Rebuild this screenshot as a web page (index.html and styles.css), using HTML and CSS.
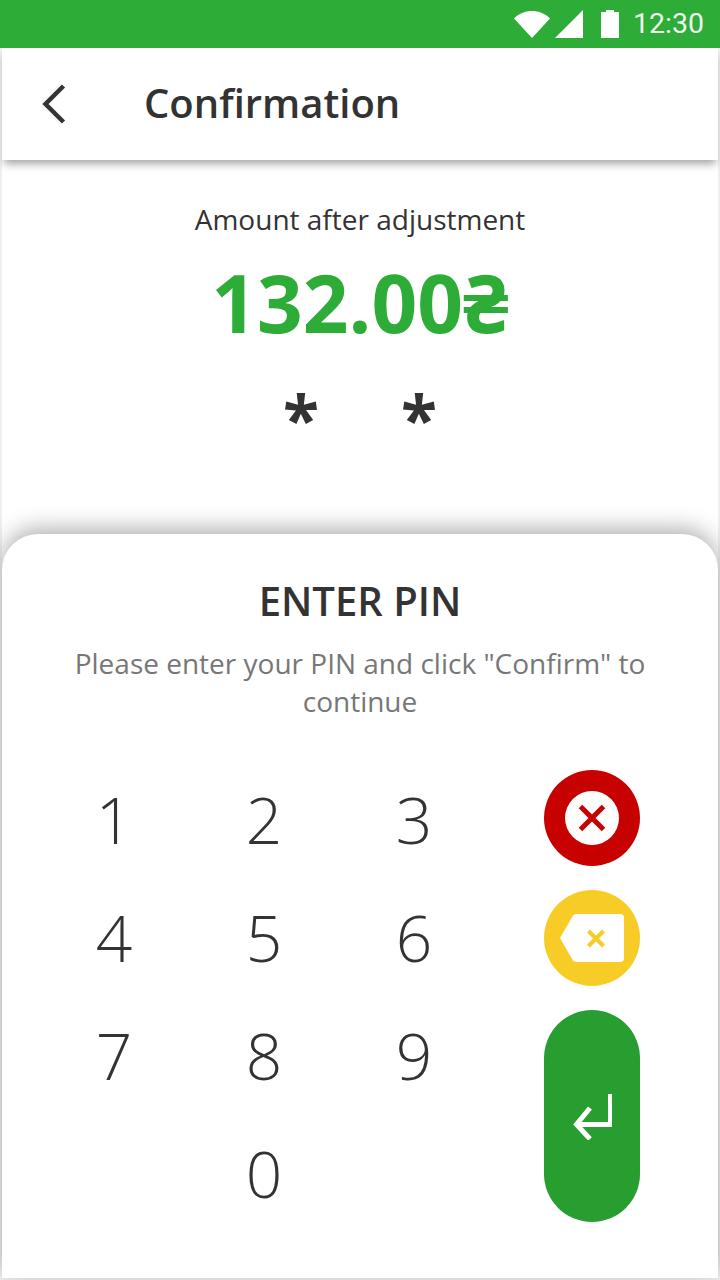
FILE: index.html
```
<!DOCTYPE html>
<html lang="en">
<head>
<meta charset="utf-8">
<title>Confirmation</title>
<link rel="stylesheet" href="styles.css">
</head>
<body>
<div class="screen">
  <div class="status">
    <svg class="st-wifi" width="36" height="28" viewBox="0 0 36 28"><path d="M0 8.500C4.800 3.500 11 1 18 1s13.200 2.500 18 7.500L18 28z" fill="#fff"/></svg>
    <svg class="st-signal" width="28" height="28" viewBox="0 0 28 28"><path d="M0 28 28 0v28z" fill="#fff"/></svg>
    <svg class="st-batt" width="18" height="28" viewBox="0 0 18 28"><path d="M5 2V0h8v2h5v26H0V2z" fill="#fff"/></svg>
    <span class="st-time">12:30</span>
  </div>
  <div class="content">
    <header class="appbar">
      <svg class="back" width="28" height="40" viewBox="0 0 28 40"><path d="M23.500 2 5.500 20l18 18" fill="none" stroke="#333" stroke-width="4.500"/></svg>
      <h1 class="title">Confirmation</h1>
    </header>
    <section class="summary">
      <p class="label">Amount after adjustment</p>
      <p class="amount">132.00<span class="currency">₴</span></p>
      <div class="stars"><span>*</span><span>*</span></div>
    </section>
    <section class="sheet">
      <h2 class="sheet-title">ENTER PIN</h2>
      <p class="sheet-text">Please enter your PIN and click "Confirm" to continue</p>
      <div class="pad">
        <div class="digits">
          <button class="digit">1</button><button class="digit">2</button><button class="digit">3</button>
          <button class="digit">4</button><button class="digit">5</button><button class="digit">6</button>
          <button class="digit">7</button><button class="digit">8</button><button class="digit">9</button>
          <span></span><button class="digit">0</button>
        </div>
        <div class="actions">
          <div class="act act-cancel">
            <svg width="96" height="96" viewBox="0 0 96 96"><circle cx="48" cy="48" r="27" fill="#fff"/><path d="M36.500 36.500l23 23m0-23-23 23" stroke="#c70000" stroke-width="5" fill="none"/></svg>
          </div>
          <div class="act act-back">
            <svg width="96" height="96" viewBox="0 0 96 96"><path d="M32 24h44a4 4 0 0 1 4 4v40a4 4 0 0 1-4 4H32a4 4 0 0 1-3-1.500L16 48l13-22.500A4 4 0 0 1 32 24z" fill="#fff"/><path d="M44.500 41l15 15m0-15-15 15" stroke="#f8cc26" stroke-width="4" fill="none"/></svg>
          </div>
          <div class="act act-ok">
            <svg width="40" height="48" viewBox="0 0 40 48"><path d="M38.500 2v30.500H5" fill="none" stroke="#fff" stroke-width="5"/><path d="M18 16 4.500 32.500 18 47" fill="none" stroke="#fff" stroke-width="5"/></svg>
          </div>
        </div>
      </div>
    </section>
  </div>
</div>
</body>
</html>
```
FILE: styles.css
```
* { box-sizing: border-box; }
html, body { margin: 0; padding: 0; }
body { width: 720px; height: 1280px; overflow: hidden; background: #fff; font-family: "Open Sans", sans-serif; color: #333; }
.screen { width: 720px; height: 1280px; display: flex; flex-direction: column; }

.status { height: 48px; flex: none; background: #2dac37; display: flex; align-items: center; justify-content: flex-end; padding-right: 16px; }
.st-wifi { margin-right: 5px; }
.st-signal { margin-right: 18px; }
.st-batt { margin-right: 14px; }
.st-time { font-family: Roboto, sans-serif; font-size: 28.500px; color: #eef6ee; line-height: 48px; }
.status svg { margin-top: -1px; }

.content { flex: 1; display: flex; flex-direction: column; border-left: 2px solid #efefef; border-bottom: 2px solid #efefef; border-right: 2px solid #efefef; min-height: 0; }

.appbar { height: 112px; flex: none; display: flex; align-items: center; padding-left: 38px; background: #fff; box-shadow: 0 6px 8px -2px rgba(0,0,0,.35); position: relative; z-index: 1; }
.back { flex: none; }
.title { margin: -2px 0 0 76px; font-size: 40px; line-height: 52px; font-weight: 600; color: #333; }

.summary { flex: 1; text-align: center; padding-top: 40px; min-height: 0; }
.label { margin: 0; font-size: 28px; line-height: 38px; color: #333; }
.amount { margin: 14px 0 0; font-size: 80px; line-height: 100px; font-weight: 700; color: #2dac37; }
.currency { font-family: "Noto Sans", sans-serif; }
.stars { display: flex; justify-content: center; gap: 82px; font-size: 66px; line-height: 80px; font-weight: 700; margin-top: 26px; color: #333; }

.sheet { height: 744px; flex: none; background: #fff; border-radius: 36px 36px 0 0; box-shadow: 0 -6px 22px rgba(0,0,0,.3); text-align: center; padding-top: 39px; position: relative; }
.sheet-title { margin: 0; font-size: 40px; line-height: 56px; font-weight: 600; color: #333; }
.sheet-text { margin: 15px auto 0; width: 600px; font-size: 28px; line-height: 38px; color: #777; }
.pad { display: flex; align-items: flex-start; margin-top: 50px; padding-left: 37px; }
.digits { width: 450px; display: grid; grid-template-columns: repeat(3, 150px); grid-auto-rows: 118px; margin-top: -9px; }
.digit { border: 0; background: none; padding: 0; font-family: "Open Sans", sans-serif; font-size: 64px; font-weight: 300; color: #333; line-height: 118px; }
.actions { margin-left: 55px; width: 96px; display: flex; flex-direction: column; gap: 24px; }
.act { width: 96px; display: flex; align-items: center; justify-content: center; border-radius: 48px; }
.act svg { display: block; }
.act-cancel { height: 96px; background: #c70000; }
.act-back { height: 96px; background: #f8cc26; }
.act-ok { height: 212px; background: #279e2f; }
```
